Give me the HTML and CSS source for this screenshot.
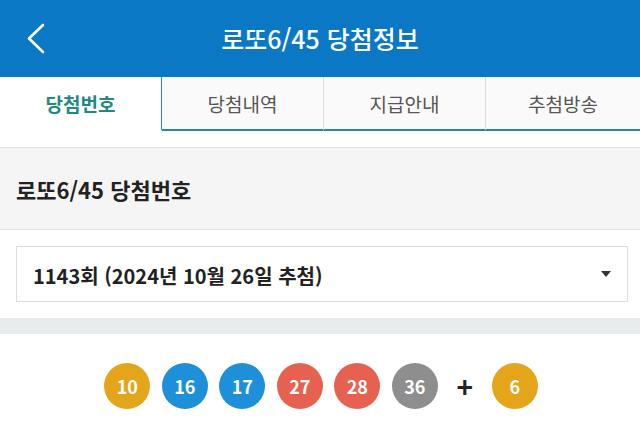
FILE: index.html
```html
<!DOCTYPE html>
<html lang="ko">
<head>
    <meta charset="UTF-8">
    <meta name="viewport" content="width=device-width, initial-scale=1.0">
    <title>로또6/45 당첨정보</title>
    <link rel="stylesheet" href="styles.css">
</head>
<body>
    <header class="app-bar">
        <button class="back" aria-label="뒤로">
            <svg width="20" height="32" viewBox="0 0 20 32">
                <path d="M17 3 L3 16.5 L17 30" fill="none" stroke="#fff" stroke-width="2.6" stroke-linecap="round" stroke-linejoin="round"/>
            </svg>
        </button>
        <h1>로또6/45 당첨정보</h1>
    </header>

    <nav class="tabs">
        <a class="tab active">당첨번호</a>
        <a class="tab">당첨내역</a>
        <a class="tab">지급안내</a>
        <a class="tab">추첨방송</a>
    </nav>
    <div class="tab-gap"></div>

    <section class="section-head">
        <h2>로또6/45 당첨번호</h2>
    </section>

    <div class="picker">
        <div class="select">
            <span>1143회 (2024년 10월 26일 추첨)</span>
            <span class="caret"></span>
        </div>
    </div>
    <div class="band"></div>

    <div class="balls">
        <span class="ball yellow">10</span>
        <span class="ball blue">16</span>
        <span class="ball blue">17</span>
        <span class="ball red">27</span>
        <span class="ball red">28</span>
        <span class="ball gray">36</span>
        <span class="plus">+</span>
        <span class="ball yellow">6</span>
    </div>
</body>
</html>
```

FILE: styles.css
```css
body {
    margin: 0;
    font-family: "Noto Sans CJK KR", "Noto Sans", sans-serif;
    background-color: #fff;
    color: #222;
}
.app-bar {
    position: relative;
    height: 77px;
    background-color: #0b78c6;
    display: flex;
    align-items: center;
    justify-content: center;
}
.app-bar h1 {
    margin: 0 0 2px;
    color: #fff;
    font-size: 25px;
    font-weight: 500;
}
.back {
    position: absolute;
    left: 26px;
    top: 22px;
    padding: 0;
    border: none;
    background: none;
    display: flex;
}
.tabs {
    display: flex;
    height: 54px;
}
.tab {
    flex: 0 0 161px;
    display: flex;
    align-items: center;
    justify-content: center;
    font-size: 19px;
    color: #555;
    background-color: #fafafa;
    border-left: 1px solid #dcdcdc;
    border-bottom: 2px solid #2b8e86;
}
.tab:last-child {
    flex: 1;
}
.tab.active {
    color: #1f8a80;
    font-weight: 700;
    background-color: #fff;
    border-left: none;
    border-right: 1px solid #2b8e86;
    border-bottom: 2px solid transparent;
}
.tab.active + .tab {
    border-left: none;
}
.tab-gap {
    height: 16px;
    border-bottom: 1px solid #dedede;
}
.section-head {
    height: 81px;
    background-color: #f5f5f5;
    border-bottom: 1px solid #e2e2e2;
    display: flex;
    align-items: center;
    padding: 0 16px;
}
.section-head h2 {
    margin: 0;
    font-size: 22px;
    font-weight: 700;
}
.picker {
    padding: 16px 12px 16px 16px;
}
.select {
    height: 54px;
    border: 1px solid #dddddd;
    display: flex;
    align-items: center;
    justify-content: space-between;
    padding: 0 16px;
    font-size: 20px;
    font-weight: 700;
    color: #222;
}
.select span:first-child {
    margin-top: 3px;
}
.caret {
    width: 0;
    height: 0;
    border-left: 5px solid transparent;
    border-right: 5px solid transparent;
    border-top: 6px solid #333;
}
.band {
    height: 16px;
    background-color: #e9ecec;
}
.balls {
    display: flex;
    align-items: center;
    justify-content: center;
    gap: 11.5px;
    padding: 29px 0 0 2px;
}
.ball {
    width: 46px;
    height: 46px;
    border-radius: 50%;
    display: flex;
    align-items: center;
    justify-content: center;
    color: #fff;
    font-size: 18px;
    font-weight: 700;
}
.yellow { background-color: #e4a51b; }
.blue { background-color: #1e8fd9; }
.red { background-color: #e6614f; }
.gray { background-color: #8e8e8e; }
.plus {
    width: 31px;
    text-align: center;
    font-size: 28px;
    font-weight: 700;
    color: #222;
}
```
